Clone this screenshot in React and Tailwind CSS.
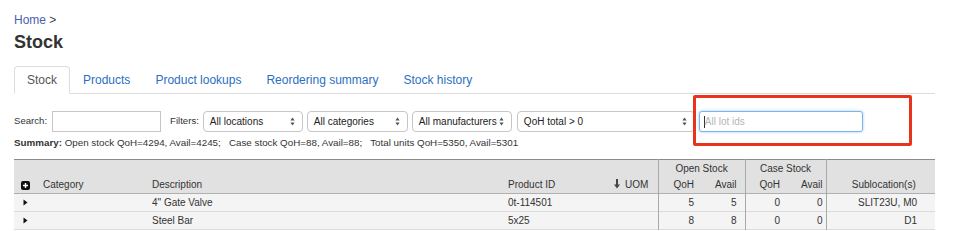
import React from 'react'

function SelectBox({ label, className }) {
  return (
    <div
      className={`h-[21px] flex items-center justify-between bg-white border border-[#c6c6c6] rounded-[4px] pl-[6px] pr-[7px] text-[10px] text-[#222] ${className}`}
    >
      <span>{label}</span>
      <svg width="5" height="9" viewBox="0 0 5 9">
        <path d="M2.5 0.5 L4.6 3.6 L0.4 3.6 Z" fill="#555" />
        <path d="M2.5 8.5 L4.6 5.4 L0.4 5.4 Z" fill="#555" />
      </svg>
    </div>
  )
}

function PlusBox() {
  return (
    <svg width="9" height="9" viewBox="0 0 9 9" className="inline-block">
      <rect x="0" y="0" width="9" height="9" rx="2" fill="#111" />
      <path d="M4.5 2 V7 M2 4.5 H7" stroke="#fff" strokeWidth="1.4" />
    </svg>
  )
}

function Caret() {
  return (
    <svg width="5" height="7" viewBox="0 0 5 7" className="inline-block">
      <path d="M0.5 0.5 L4.5 3.5 L0.5 6.5 Z" fill="#111" />
    </svg>
  )
}

function SortDown() {
  return (
    <svg width="6" height="10" viewBox="0 0 6 10" className="inline-block mr-[5px] align-[-1px]">
      <rect x="2" y="0" width="2" height="6" fill="#444" />
      <path d="M0 5.5 H6 L3 9.5 Z" fill="#444" />
    </svg>
  )
}

const tabs = ['Products', 'Product lookups', 'Reordering summary', 'Stock history']

const rows = [
  { desc: '4" Gate Valve', pid: '0t-114501', oq: 5, oa: 5, cq: 0, ca: 0, sub: 'SLIT23U, M0' },
  { desc: 'Steel Bar', pid: '5x25', oq: 8, oa: 8, cq: 0, ca: 0, sub: 'D1' },
]

export default function App() {
  return (
    <div className="relative w-[966px] h-[231px] overflow-hidden bg-white font-['Liberation_Sans',Arial,sans-serif] text-[#333]">
      <div className="pl-[14px] pr-[31px] pt-[12px]">
        {/* Breadcrumb + title */}
        <div className="h-[16px] leading-[16px] text-[12px]">
          <span className="text-[#4d5cb0]">Home</span>
          <span className="text-[#444]"> &gt;</span>
        </div>
        <h1 className="mt-[2px] leading-[24px] text-[18px] font-bold text-[#333]">Stock</h1>

        {/* Tabs */}
        <div className="mt-[12px] flex border-b border-[#dddddd] h-[28px]">
          <div className="h-[28px] px-[12px] flex items-center border border-[#dddddd] border-b-white rounded-t-[4px] bg-white text-[12px] text-[#555] mr-[1px]">
            Stock
          </div>
          {tabs.map((t) => (
            <div key={t} className="h-[27px] px-[12px] flex items-center text-[12px] text-[#2b6fc2] mr-[1px]">
              {t}
            </div>
          ))}
        </div>

        {/* Filters */}
        <div className="mt-[17px] flex items-center text-[9.6px] text-[#333]">
          <span>Search:</span>
          <div className="ml-[5px] w-[109px] h-[21px] border border-[#c6c6c6] bg-white"></div>
          <span className="ml-[9px]">Filters:</span>
          <SelectBox label="All locations" className="ml-[4px] w-[100px]" />
          <SelectBox label="All categories" className="ml-[4px] w-[101px]" />
          <SelectBox label="All manufacturers" className="ml-[4px] w-[100px]" />
          <SelectBox label="QoH total > 0" className="ml-[5px] w-[178px]" />
          <div className="ml-[4px] w-[164px] h-[21px] flex items-center border border-[#7fb6ea] rounded-[3px] shadow-[0_0_3px_#9cc8f0] bg-white pl-[4px]">
            <span className="w-px h-[12px] bg-[#333]"></span>
            <span className="text-[#b5b5b5] text-[10px]">All lot ids</span>
          </div>
        </div>

        {/* Summary */}
        <div className="mt-[4px] leading-[14px] text-[9.8px] text-[#333] whitespace-pre">
          <span className="font-bold">Summary:</span>
          {' Open stock QoH=4294, Avail=4245;   Case stock QoH=88, Avail=88;   Total units QoH=5350, Avail=5301'}
        </div>

        {/* Table */}
        <table className="mt-[9px] w-[921px] table-fixed border-collapse text-[10px] text-[#333]">
          <colgroup>
            <col className="w-[23px]" />
            <col className="w-[109px]" />
            <col className="w-[356px]" />
            <col className="w-[100px]" />
            <col className="w-[56px]" />
            <col className="w-[44px]" />
            <col className="w-[43px]" />
            <col className="w-[41px]" />
            <col className="w-[40px]" />
            <col className="w-[109px]" />
          </colgroup>
          <thead className="bg-[#e1e1e1]">
            <tr className="h-[17px] border-t border-[#8a8a8a]">
              <th rowSpan={2} className="align-bottom pb-[1px] text-center font-normal">
                <PlusBox />
              </th>
              <th rowSpan={2} className="align-bottom pb-[1px] pl-[6px] text-left font-normal">Category</th>
              <th rowSpan={2} className="align-bottom pb-[1px] pl-[6px] text-left font-normal">Description</th>
              <th rowSpan={2} className="align-bottom pb-[1px] pl-[6px] text-left font-normal">Product ID</th>
              <th rowSpan={2} className="align-bottom pb-[1px] pl-[12px] text-left font-normal whitespace-nowrap">
                <SortDown />
                UOM
              </th>
              <th colSpan={2} className="border-l border-[#a8a8a8] text-center font-normal">Open Stock</th>
              <th colSpan={2} className="border-l border-[#a8a8a8] text-center font-normal">Case Stock</th>
              <th rowSpan={2} className="border-l border-[#a8a8a8] align-bottom pb-[1px] pl-[6px] text-center font-normal">
                Sublocation(s)
              </th>
            </tr>
            <tr className="h-[17px] border-b border-[#b0b0b0]">
              <th className="border-l border-[#a8a8a8] text-right pr-[8px] font-normal">QoH</th>
              <th className="text-right pr-[8px] font-normal">Avail</th>
              <th className="border-l border-[#a8a8a8] text-right pr-[6px] font-normal">QoH</th>
              <th className="text-right pr-[3px] font-normal">Avail</th>
            </tr>
          </thead>
          <tbody className="bg-[#f4f4f4]">
            {rows.map((r) => (
              <tr key={r.pid} className="h-[18px] border-b border-[#dcdcdc]">
                <td className="text-center leading-none">
                  <Caret />
                </td>
                <td className="pl-[6px]"></td>
                <td className="pl-[6px]">{r.desc}</td>
                <td className="pl-[6px]">{r.pid}</td>
                <td></td>
                <td className="border-l border-[#a8a8a8] text-right pr-[8px]">{r.oq}</td>
                <td className="text-right pr-[8px]">{r.oa}</td>
                <td className="border-l border-[#a8a8a8] text-right pr-[6px]">{r.cq}</td>
                <td className="text-right pr-[3px]">{r.ca}</td>
                <td className="border-l border-[#a8a8a8] text-right pr-[18px]">{r.sub}</td>
              </tr>
            ))}
          </tbody>
        </table>
      </div>

      {/* Red highlight annotation */}
      <div className="absolute left-[693px] top-[95px] w-[219px] h-[51px] border-[3px] border-[#e8341c] rounded-[2px]"></div>
    </div>
  )
}
